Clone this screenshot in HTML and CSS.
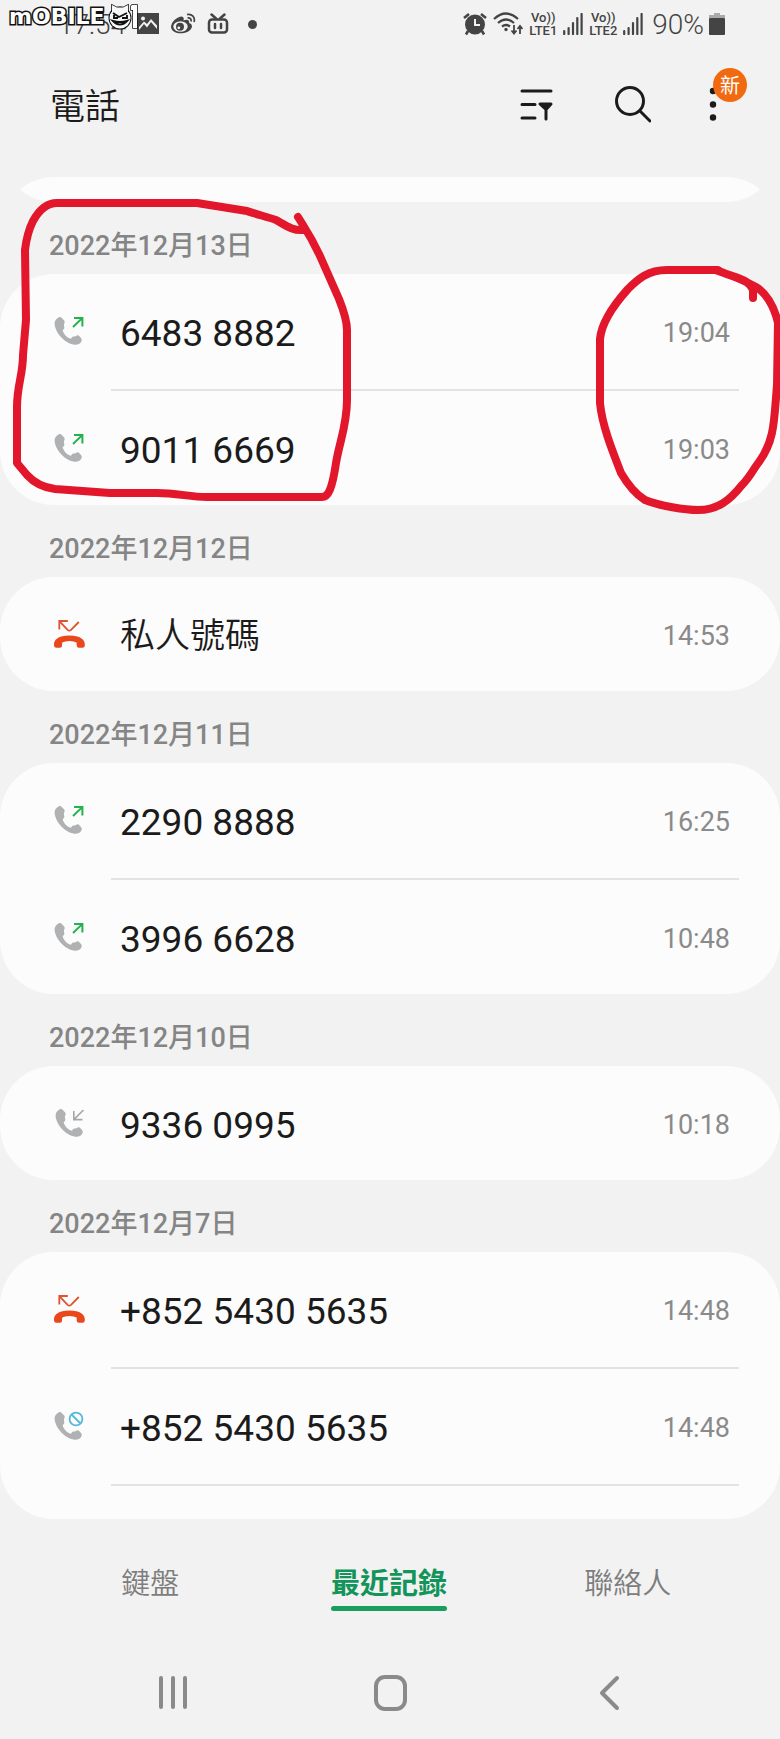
FILE: index.html
```html
<!DOCTYPE html>
<html lang="zh-Hant">
<head>
    <meta charset="UTF-8">
    <meta name="viewport" content="width=device-width, initial-scale=1.0">
    <title>電話</title>
    <link rel="stylesheet" href="styles.css">
</head>
<body>

    <!-- shared icons -->
    <svg class="defs" width="0" height="0">
        <symbol id="handset" viewBox="0 0 32 32">
            <path d="M5.5 2.6C7 1.6 8 2.2 9 3.2L11.2 5.6C12.2 7 11.4 8 11 9.4C10.6 11 11.6 12 11.4 13C11 14.6 9.4 14.6 9.8 16C11 19.5 14 22.6 17 23.6C18.6 24 18.4 22.6 19.6 21.8C20.8 21.2 22 21.8 23.4 20.8C24.6 20 25.4 20.2 26.4 21.2L28 23C29 24.2 29 25.4 28.2 26.8C26.6 29.6 23.6 30.2 20.4 29.6C15 28.4 8.5 24 5 18.2C3 15 1.4 11 1.6 8C1.8 5.6 3.4 3.8 5.5 2.6Z" fill="#b0b1b2"/>
        </symbol>
        <symbol id="outgoing" viewBox="0 0 32 32">
            <use href="#handset"/>
            <path d="M20 12L29 3.4M21 3H29.4V11.6" fill="none" stroke="#23b24b" stroke-width="2"/>
        </symbol>
        <symbol id="incoming" viewBox="0 0 32 32">
            <use href="#handset" x="1"/>
            <path d="M30.5 3L21 12.4M20.8 4V12.6H29.4" fill="none" stroke="#a5a6a7" stroke-width="1.6"/>
        </symbol>
        <symbol id="missed" viewBox="0 0 32 32">
            <path d="M14.8 3H6.3V11.6M6.6 3.3L14.6 11.8Q16.3 13.4 18 11.8L25.8 4" fill="none" stroke="#df5430" stroke-width="1.8"/>
            <path d="M1 27.5C.6 22 5 17.6 16.4 17.6S32.2 22 31.8 27.5Q31.6 29.8 29.5 29.8H25.8Q23.9 29.8 23.8 28L23.6 24.6Q21 23 16.4 23T9.2 24.6L9 28Q8.9 29.8 7 29.8H3.3Q1.2 29.8 1 27.5Z" fill="#e8481c"/>
        </symbol>
        <symbol id="blocked" viewBox="0 0 32 32">
            <use href="#handset"/>
            <circle cx="23" cy="9" r="8.5" fill="#fcfcfc"/>
            <circle cx="23" cy="9" r="6.4" fill="none" stroke="#55b8d8" stroke-width="1.8"/>
            <path d="M18.5 4.5L27.5 13.5" stroke="#55b8d8" stroke-width="1.8"/>
        </symbol>
        <symbol id="signal" viewBox="0 0 20 22">
            <path d="M1.2 18V21M5.6 15V21M10 10V21M14.3 5V21M18.6 1V21" stroke="#444" stroke-width="2.2" stroke-linecap="round"/>
        </symbol>
    </svg>

    <div class="statusbar">
        <div class="status-left">
            <span class="clock">17:54</span>
            <svg width="22" height="22" viewBox="0 0 22 22">
                <path fill="#444" d="M0 0H22V21H0Z"/>
                <path fill="#f2f2f2" d="M2 17L7 11L10 14.5L14 9L20 16V12.5L14 6L10 11L7 8.5L2 14Z"/>
                <circle cx="6" cy="5.5" r="2" fill="#f2f2f2"/>
            </svg>
            <svg width="26" height="22" viewBox="0 0 26 22">
                <path d="M1 14C1 9 7 4 11 3.5C14 3.5 14 6 13.5 7.5C17 6 20 7 19 10C22 11 22.500 13 21.5 15C18.5 22 2 22.5 1 14Z" fill="#444"/>
                <ellipse cx="10.5" cy="13.5" rx="7.2" ry="5.2" fill="#f2f2f2"/>
                <circle cx="10" cy="13.8" r="4" fill="#444"/>
                <circle cx="8.8" cy="14.8" r="1.4" fill="#f2f2f2"/>
                <path d="M17 1.5C22 .5 25.5 4.5 24 9M17.5 5C20 4.5 21.5 6 21 8.5" fill="none" stroke="#444" stroke-width="1.7"/>
            </svg>
            <svg width="22" height="22" viewBox="0 0 22 22" fill="none" stroke="#444" stroke-width="2.5" stroke-linecap="round">
                <rect x="2" y="6.5" width="18" height="13" rx="3"/>
                <path d="M4.5 1.5L9 5.5M17.5 1.5L13 5.5M8 11V15M14 11V15"/>
            </svg>
            <span class="dot"></span>
        </div>
        <div class="status-right">
            <svg width="26" height="24" viewBox="0 0 26 24">
                <circle cx="13" cy="12.5" r="10" fill="#444"/>
                <path d="M2 6L7 2M24 6L19 2M6 19L4 22.5M20 19L22 22.5" stroke="#444" stroke-width="2.6"/>
                <path d="M13 7V13H18" fill="none" stroke="#f2f2f2" stroke-width="2"/>
            </svg>
            <svg width="30" height="24" viewBox="0 0 30 24" fill="none" stroke="#444" stroke-width="2.2">
                <path d="M1 7Q13 -4 25 7M5 11Q13 4 21 11M9 14.5Q13 11.5 17 14.500"/>
                <path d="M21 13V21M18.5 18.5L21 21.5L23.5 18.5M27 22V14M24.5 17L27 14L29.5 17" stroke-width="1.8"/>
                <circle cx="13" cy="17.5" r="1.7" fill="#444" stroke="none"/>
            </svg>
            <div class="volte"><span>Vo))</span><span>LTE1</span></div>
            <svg width="20" height="22"><use href="#signal"/></svg>
            <div class="volte"><span>Vo))</span><span>LTE2</span></div>
            <svg width="20" height="22"><use href="#signal"/></svg>
            <span class="percent">90%</span>
            <svg width="16" height="24" viewBox="0 0 16 24">
                <path d="M5 1H11V4H5Z" fill="#aaa"/>
                <rect y="3" width="16" height="3" fill="#aaa"/>
                <rect y="6" width="16" height="17" rx="1" fill="#444"/>
            </svg>
        </div>
        <div class="watermark">
            <span>mOBILE</span>
            <svg width="34" height="28" viewBox="0 0 34 28">
                <circle cx="13" cy="15" r="10.5" fill="#f7f7f7" stroke="#111" stroke-width="2"/>
                <path d="M5 9L5 2L10 4.600H16L21 2V9" fill="#f7f7f7" stroke="#111" stroke-width="1.6"/>
                <path d="M6 10L12 14L20 10M7 12V15L11 15M20 12V15L15 15M6 18Q13 25 20 18Q13 20 6 18Z" fill="none" stroke="#111" stroke-width="1.9"/>
                <path d="M25 2H30V25H26V7H24V3Z" fill="#fff" stroke="#111" stroke-width="1.5"/>
            </svg>
        </div>
    </div>

    <header class="appbar">
        <h1>電話</h1>
        <div class="actions">
            <button class="icon-btn" aria-label="篩選">
                <svg width="36" height="40" viewBox="0 0 36 40" fill="none" stroke="#1b1b1b" stroke-width="3" stroke-linecap="round">
                    <path d="M3 6H32M3 19.5H16M3 33H16"/>
                    <path d="M21 19H32L27 24.5V34V24.5Z" fill="#1b1b1b" stroke-linejoin="round"/>
                </svg>
            </button>
            <button class="icon-btn" aria-label="搜尋">
                <svg width="40" height="40" viewBox="0 0 40 40" fill="none" stroke="#1b1b1b" stroke-width="3" stroke-linecap="round">
                    <circle cx="19" cy="16" r="13.5"/>
                    <path d="M29 26L39 36"/>
                </svg>
            </button>
            <button class="icon-btn" aria-label="更多選項">
                <svg width="12" height="40" viewBox="0 0 12 40" fill="#1b1b1b">
                    <circle cx="6" cy="6" r="3.2"/>
                    <circle cx="6" cy="19.5" r="3.2"/>
                    <circle cx="6" cy="32.5" r="3.2"/>
                </svg>
                <span class="badge">新</span>
            </button>
        </div>
    </header>

    <main>
        <svg class="card-tail" height="25" viewBox="0 0 740 25" preserveAspectRatio="none">
            <path d="M0 12.5Q14 0 36 0H704Q726 0 740 12.5Q726 25 704 25H36Q14 25 0 12.5Z" fill="#fcfcfc"/>
        </svg>

        <h2>2022年12月13日</h2>
        <ul class="card">
            <li><svg class="type"><use href="#outgoing"/></svg><span class="name">6483 8882</span><time>19:04</time></li>
            <li><svg class="type"><use href="#outgoing"/></svg><span class="name">9011 6669</span><time>19:03</time></li>
        </ul>

        <h2>2022年12月12日</h2>
        <ul class="card">
            <li><svg class="type"><use href="#missed"/></svg><span class="name cjk">私人號碼</span><time>14:53</time></li>
        </ul>

        <h2>2022年12月11日</h2>
        <ul class="card">
            <li><svg class="type"><use href="#outgoing"/></svg><span class="name">2290 8888</span><time>16:25</time></li>
            <li><svg class="type"><use href="#outgoing"/></svg><span class="name">3996 6628</span><time>10:48</time></li>
        </ul>

        <h2>2022年12月10日</h2>
        <ul class="card">
            <li><svg class="type"><use href="#incoming"/></svg><span class="name">9336 0995</span><time>10:18</time></li>
        </ul>

        <h2>2022年12月7日</h2>
        <ul class="card">
            <li><svg class="type"><use href="#missed"/></svg><span class="name">+852 5430 5635</span><time>14:48</time></li>
            <li><svg class="type"><use href="#blocked"/></svg><span class="name">+852 5430 5635</span><time>14:48</time></li>
            <li class="cut"></li>
        </ul>
    </main>

    <nav class="tabs">
        <a href="#keypad"><span>鍵盤</span></a>
        <a href="#recents" class="active"><span>最近記錄</span></a>
        <a href="#contacts"><span>聯絡人</span></a>
    </nav>

    <div class="navbar">
        <button class="icon-btn" aria-label="最近使用">
            <svg width="36" height="36" viewBox="0 0 36 36" fill="none" stroke="#8a8a8a" stroke-width="4" stroke-linecap="round">
                <path d="M6 3V32M18 3V32M30 3V32"/>
            </svg>
        </button>
        <button class="icon-btn" aria-label="首頁">
            <svg width="36" height="36" viewBox="0 0 36 36" fill="none" stroke="#8a8a8a" stroke-width="4">
                <rect x="3" y="2" width="29" height="32" rx="9"/>
            </svg>
        </button>
        <button class="icon-btn" aria-label="返回">
            <svg width="36" height="36" viewBox="0 0 36 36" fill="none" stroke="#8a8a8a" stroke-width="4" stroke-linecap="round" stroke-linejoin="round">
                <path d="M26 3L11 18L26 33"/>
            </svg>
        </button>
    </div>

    <!-- hand drawn marks -->
    <svg class="marks" width="780" height="520" viewBox="0 0 780 520" fill="none" stroke="#e2172c" stroke-width="8" stroke-linecap="round" stroke-linejoin="round">
        <path d="M298 217L303 225Q312 239 320 256L339 299Q347 319 347 330V400C347 425 340 440 336 463C332 490 328 497 322 497H207C190 497 177 493 157 493H110L55 489Q38 487 27 475L17 463V407C17 385 23 375 23 355L26 320L25 250Q27 233 33 221Q43 203 57 203H197L247 211C255 214 268 217 276 220C285 225 293 231 303 230"/>
        <path d="M753 298V290Q750 283 743 280C733 275 725 275 718 270H667C648 270 638 279 628 289Q602 318 600 339V403C602 425 612 450 621 473Q632 492 645 500C660 506 685 510 698 510C718 510 730 500 742 485C750 477 754 468 759 462C775 440 774 420 777 385L778 323C774 305 765 292 756 287Q740 278 718 271"/>
    </svg>

</body>
</html>
```

FILE: styles.css
```css
* {
    box-sizing: border-box;
}

body {
    position: relative;
    margin: 0;
    background-color: #f2f2f2;
    color: #1b1b1b;
    font-family: Roboto, "Noto Sans CJK TC", sans-serif;
}

.defs {
    display: block;
}

.statusbar {
    position: relative;
    display: flex;
    justify-content: space-between;
    align-items: center;
    height: 48px;
    padding: 0 55px 0 58px;
    color: #444;
}

.status-left,
.status-right {
    display: flex;
    align-items: center;
}

.status-left {
    gap: 11px;
}

.status-right {
    gap: 5px;
}

.clock,
.percent {
    padding-top: 2px;
    font-size: 28px;
    font-weight: 300;
    line-height: 32px;
}

.percent {
    margin-left: 4px;
}

.dot {
    width: 9px;
    height: 9px;
    margin-left: 8px;
    border-radius: 50%;
    background-color: #444;
}

.volte {
    display: flex;
    flex-direction: column;
    align-items: center;
    width: 30px;
    font-size: 13px;
    font-weight: 500;
    line-height: 13px;
}

/* site logo over the clock */
.watermark {
    position: absolute;
    left: 9px;
    top: 3px;
    display: flex;
    align-items: center;
    gap: 2px;
    color: #fff;
    font-family: "DejaVu Sans", sans-serif;
    font-size: 22px;
    font-weight: bold;
    line-height: 28px;
    -webkit-text-stroke: 3px #111;
    paint-order: stroke fill;
}

.appbar {
    display: flex;
    justify-content: space-between;
    align-items: center;
    height: 114px;
    padding: 0 61px 0 50px;
}

h1 {
    margin: 0;
    padding-top: 5px;
    font-size: 35px;
    font-weight: 350;
    line-height: 52px;
}

.actions {
    display: flex;
    gap: 56px;
}

.icon-btn {
    position: relative;
    display: flex;
    padding: 0;
    border: none;
    background: none;
    cursor: pointer;
}

.badge {
    position: absolute;
    left: 6px;
    top: -17px;
    width: 34px;
    height: 34px;
    border-radius: 50%;
    background-color: #f26a10;
    color: #fff;
    font-family: "Noto Sans CJK TC", sans-serif;
    font-size: 20px;
    line-height: 34px;
    text-align: center;
}

main {
    padding-top: 15px;
}

.card-tail {
    display: block;
    width: calc(100% - 40px);
    margin: 0 20px;
}

h2 {
    margin: 0;
    padding: 28px 49px 12px;
    color: #858585;
    font-size: 27px;
    font-weight: 500;
    line-height: 32px;
}

.card {
    margin: 0;
    padding: 0 41px 0 53px;
    border-radius: 54px;
    background-color: #fcfcfc;
    list-style: none;
}

.card li {
    position: relative;
    display: flex;
    align-items: center;
    height: 114px;
    padding-right: 9px;
}

.card li + li {
    margin-top: 3px;
}

.card li + li::before {
    content: "";
    position: absolute;
    left: 58px;
    right: 0;
    top: -2px;
    height: 2px;
    background-color: #e3e3e3;
}

.card .cut {
    height: 33px;
}

.type {
    flex: none;
    width: 32px;
    height: 32px;
    overflow: visible;
}

.name {
    flex: 1;
    margin-left: 35px;
    padding-top: 5px;
    font-size: 37px;
    line-height: 44px;
}

.cjk {
    font-size: 35px;
    font-weight: 350;
}

time {
    padding-top: 4px;
    color: #8a8a8a;
    font-size: 27px;
    line-height: 32px;
}

.tabs {
    display: flex;
    height: 116px;
    padding: 43px 33px 0 31px;
}

.tabs a {
    flex: 1;
    color: #7d7d7d;
    font-size: 29px;
    font-weight: 350;
    line-height: 44px;
    text-align: center;
    text-decoration: none;
}

.tabs span {
    display: inline-block;
}

.tabs .active {
    color: #12945a;
    font-weight: bold;
}

.tabs .active span::after {
    content: "";
    display: block;
    height: 5px;
    border-radius: 3px;
    background-color: #1a9e60;
}

.navbar {
    display: flex;
    justify-content: space-around;
    align-items: center;
    height: 104px;
    padding: 11px 62px 0 64px;
}

.marks {
    position: absolute;
    left: 0;
    top: 0;
    pointer-events: none;
}
```
